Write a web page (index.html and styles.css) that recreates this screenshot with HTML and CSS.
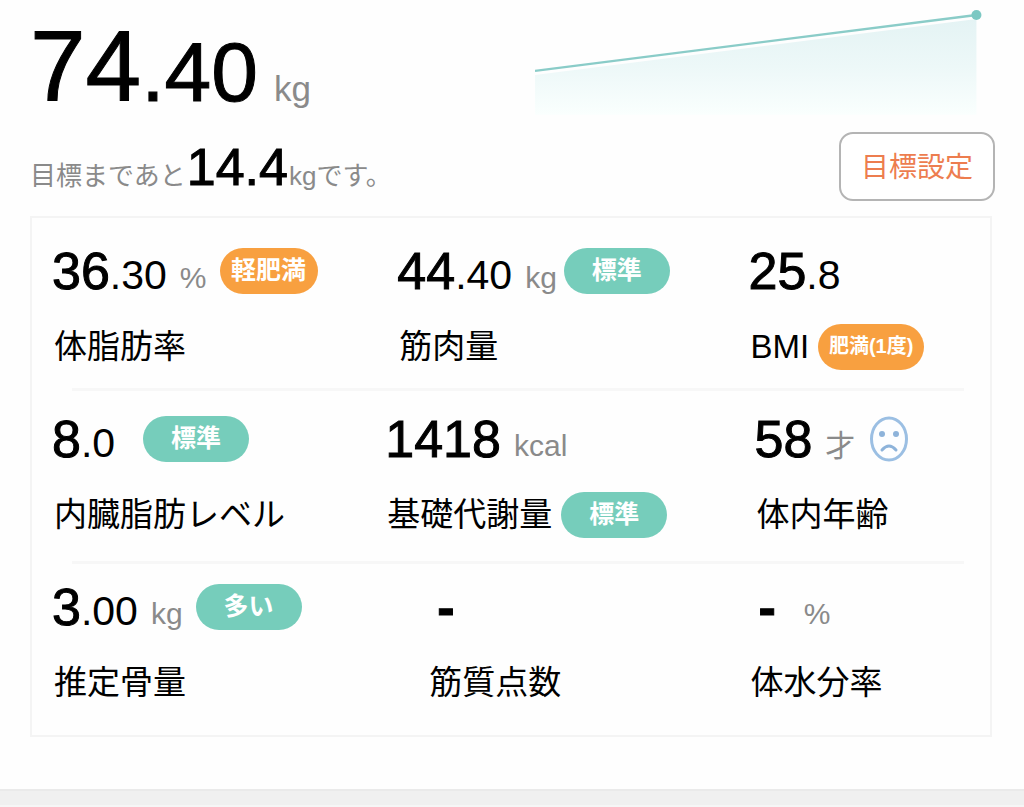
FILE: index.html
```html
<!DOCTYPE html>
<html lang="ja">
<head>
<meta charset="utf-8">
<meta name="viewport" content="width=device-width, initial-scale=1">
<title>体組成</title>
<link rel="stylesheet" href="styles.css">
</head>
<body>
<main class="page">
  <header class="summary">
    <p class="weight">74<span class="weight-decimal">.40</span><span class="weight-unit">kg</span></p>
    <svg class="trend" viewBox="0 0 448 118" role="img" aria-label="体重の推移">
      <defs>
        <linearGradient id="trend-fill" x1="0" y1="0" x2="0" y2="1">
          <stop offset="0" stop-color="#e4f3f4"/>
          <stop offset="0.5" stop-color="#edf8f8"/>
          <stop offset="1" stop-color="#fafffe"/>
        </linearGradient>
      </defs>
      <path d="M0 75 L442 19 V115 H0 Z" fill="url(#trend-fill)"/>
      <path d="M0 71 L442 15" fill="none" stroke="#8accc8" stroke-width="2.4"/>
      <circle cx="442" cy="15" r="5" fill="#7cc8c3"/>
    </svg>
  </header>

  <section class="goal">
    <p class="goal-text">目標まであと<strong class="goal-number">14.4</strong>kgです。</p>
    <button class="goal-button" type="button">目標設定</button>
  </section>

  <section class="card">
    <div class="row">
      <div class="metric">
        <div class="value"><span class="number">36<span class="decimal">.30</span></span><span class="unit">%</span><span class="badge badge-warn badge-snug">軽肥満</span></div>
        <div class="label">体脂肪率</div>
      </div>
      <div class="metric indent">
        <div class="value"><span class="number">44<span class="decimal">.40</span></span><span class="unit">kg</span><span class="badge badge-near">標準</span></div>
        <div class="label">筋肉量</div>
      </div>
      <div class="metric">
        <div class="value"><span class="number">25<span class="decimal">.8</span></span></div>
        <div class="label">BMI<span class="badge badge-warn badge-long">肥満(1度)</span></div>
      </div>
    </div>
    <div class="row">
      <div class="metric">
        <div class="value value-wide"><span class="number">8<span class="decimal">.0</span></span><span class="badge">標準</span></div>
        <div class="label">内臓脂肪レベル</div>
      </div>
      <div class="metric">
        <div class="value"><span class="number">1418</span><span class="unit">kcal</span></div>
        <div class="label">基礎代謝量<span class="badge">標準</span></div>
      </div>
      <div class="metric indent-small">
        <div class="value"><span class="number">58</span><span class="unit">才</span>
          <svg class="face" viewBox="0 0 40 46" role="img" aria-label="悲しい顔">
            <ellipse cx="21" cy="23" rx="17.500" ry="21" fill="#fdfeff" stroke="#9bbfe3" stroke-width="3"/>
            <circle cx="14" cy="18" r="3" fill="#8db3da"/>
            <circle cx="28" cy="18" r="3" fill="#8db3da"/>
            <path d="M14 34 Q21 26 28 34" fill="none" stroke="#8db3da" stroke-width="3" stroke-linecap="round"/>
          </svg>
        </div>
        <div class="label">体内年齢</div>
      </div>
    </div>
    <div class="row">
      <div class="metric">
        <div class="value"><span class="number">3<span class="decimal">.00</span></span><span class="unit">kg</span><span class="badge">多い</span></div>
        <div class="label">推定骨量</div>
      </div>
      <div class="metric indent-large">
        <div class="value value-empty"><span class="number">-</span></div>
        <div class="label">筋質点数</div>
      </div>
      <div class="metric">
        <div class="value value-empty value-wide"><span class="number">-</span><span class="unit">%</span></div>
        <div class="label">体水分率</div>
      </div>
    </div>
  </section>
</main>
<footer class="divider-bar"></footer>
</body>
</html>
```

FILE: styles.css
```css
* {
  box-sizing: border-box;
}

body {
  margin: 0;
  min-height: 100vh;
  display: flex;
  flex-direction: column;
  background: #fefefe;
  color: #000;
  font-family: "Liberation Sans", "Noto Sans CJK JP", sans-serif;
}

p {
  margin: 0;
}

.page {
  flex: 1;
  padding: 0 29px 52px 30px;
}

.summary {
  display: flex;
  justify-content: space-between;
  align-items: flex-start;
  padding-right: 13px;
}

.weight {
  padding-top: 7px;
  font-size: 100px;
  line-height: 118px;
  white-space: nowrap;
  -webkit-text-stroke: 1px #000;
}

.weight-decimal {
  font-size: 84px;
  line-height: 1;
}

.weight-unit {
  margin-left: 16px;
  color: #8a8a8a;
  font-size: 35px;
  line-height: 1;
  -webkit-text-stroke: 0;
}

.trend {
  display: block;
  width: 47%;
}

.goal {
  display: flex;
  justify-content: space-between;
  align-items: center;
  height: 69px;
  margin-top: 7px;
}

.goal-text {
  color: #8a8a8a;
  font-size: 26px;
  line-height: 1;
}

.goal-number {
  margin: 0 1px;
  color: #000;
  font-size: 52px;
  font-weight: 400;
  line-height: 68px;
  -webkit-text-stroke: 1px #000;
}

.goal-button {
  height: 69px;
  padding: 0 20px 3px;
  border: 2px solid #b4b4b4;
  border-radius: 14px;
  background: #fff;
  color: #ed7d4f;
  font-family: inherit;
  font-size: 28px;
}

.card {
  margin-top: 15px;
  margin-right: 3px;
  border: 2px solid #f4f4f4;
}

.row {
  display: grid;
  grid-template-columns: 334fr 364fr 242fr;
  height: 173px;
  padding: 23px 0 0 20px;
  background: linear-gradient(#f7f7f7, #f7f7f7) 40px 100% / calc(100% - 66px) 3px no-repeat;
}

.row:nth-child(2) {
  padding-top: 18px;
}

.row:nth-child(3) {
  height: 171px;
  padding-top: 13px;
  background: none;
}

.indent-small {
  padding-left: 6px;
}

.indent {
  padding-left: 12px;
}

.indent-large {
  padding-left: 42px;
}

.value {
  display: flex;
  align-items: center;
  gap: 13px;
  height: 60px;
  white-space: nowrap;
}

.value-wide {
  gap: 28px;
}

.value-empty {
  padding-left: 10px;
}

.number {
  font-size: 52px;
  line-height: 60px;
  -webkit-text-stroke: 1px #000;
}

.value-empty .number {
  font-weight: 700;
}

.decimal {
  font-size: 41px;
  line-height: 1;
  -webkit-text-stroke: 0;
}

.unit {
  padding-top: 14px;
  color: #8a8a8a;
  font-size: 30px;
  line-height: 36px;
}

.label {
  display: flex;
  align-items: center;
  gap: 9px;
  height: 48px;
  margin-top: 22px;
  padding-left: 2px;
  font-size: 33px;
  line-height: 48px;
  white-space: nowrap;
}

.badge {
  width: 106px;
  height: 46px;
  border-radius: 23px;
  background: #76cdbb;
  color: #fff;
  font-size: 25px;
  font-weight: 700;
  line-height: 44px;
  text-align: center;
}

.badge-warn {
  background: #f8a040;
}

.badge-snug {
  width: 98px;
}

.badge-near {
  margin-left: -6px;
}

.badge-long {
  font-size: 20px;
}

.face {
  width: 40px;
  height: 46px;
}

.divider-bar {
  height: 18px;
  border-top: 2px solid #eaeaea;
  border-bottom: 2px solid #f6f6f6;
  background: #f0f0f0;
}
```
